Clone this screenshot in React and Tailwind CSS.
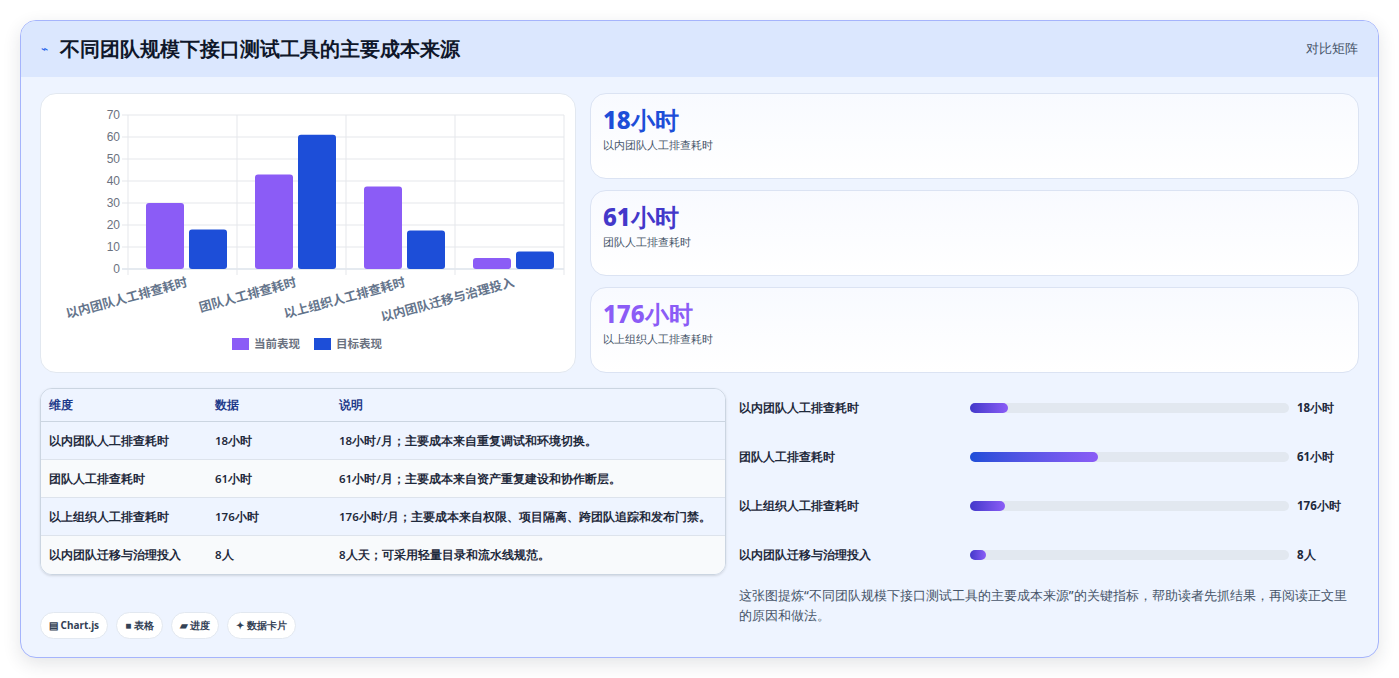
import React from "react";

const rows = [
  { name: "以内团队人工排查耗时", value: "18小时", note: "18小时/月；主要成本来自重复调试和环境切换。", cur: 30, tgt: 18, pct: 12 },
  { name: "团队人工排查耗时", value: "61小时", note: "61小时/月；主要成本来自资产重复建设和协作断层。", cur: 43, tgt: 61, pct: 40 },
  { name: "以上组织人工排查耗时", value: "176小时", note: "176小时/月；主要成本来自权限、项目隔离、跨团队追踪和发布门禁。", cur: 37.5, tgt: 17.5, pct: 11 },
  { name: "以内团队迁移与治理投入", value: "8人", note: "8人天；可采用轻量目录和流水线规范。", cur: 5, tgt: 8, pct: 5 },
];

function Chart() {
  const x0 = 87, y0 = 21, w = 436, h = 154;
  const sy = (v) => y0 + h - (v / 70) * h;
  const gw = w / 4;
  return (
    <svg width="535" height="279" className="block" style={{ fontFamily: "Liberation Sans, Noto Sans CJK SC, sans-serif" }}>
      {[0, 10, 20, 30, 40, 50, 60, 70].map((v) => (
        <g key={v}>
          <line x1={x0 - 6} x2={x0 + w} y1={sy(v)} y2={sy(v)} stroke={v === 0 ? "#cbd5e1" : "#e5e7eb"} />
          <text x={x0 - 8} y={sy(v) + 4} textAnchor="end" fontSize="12" fill="#6b7280">{v}</text>
        </g>
      ))}
      {[0, 1, 2, 3, 4].map((i) => (
        <line key={i} x1={x0 + i * gw} x2={x0 + i * gw} y1={y0} y2={y0 + h + 6} stroke="#e5e7eb" />
      ))}
      {rows.map((r, i) => {
        const gx = x0 + i * gw;
        return (
          <g key={i}>
            <rect x={gx + 18} y={sy(r.cur)} width={38} height={y0 + h - sy(r.cur)} rx="3" fill="#8b5cf6" />
            <rect x={gx + 61} y={sy(r.tgt)} width={38} height={y0 + h - sy(r.tgt)} rx="3" fill="#1d4ed8" />
            <text transform={`translate(${gx + 60},${y0 + h + 17}) rotate(-15)`} textAnchor="end" fontSize="12.5" fontWeight="700" fill="#64748b">{r.name}</text>
          </g>
        );
      })}
      <rect x="191" y="244" width="17" height="12" fill="#8b5cf6" />
      <text x="213" y="254" fontSize="11.5" fontWeight="600" fill="#6b7280">当前表现</text>
      <rect x="273" y="244" width="17" height="12" fill="#1d4ed8" />
      <text x="295" y="254" fontSize="11.5" fontWeight="600" fill="#6b7280">目标表现</text>
    </svg>
  );
}

export default function App() {
  const stats = [
    { v: "18小时", l: "以内团队人工排查耗时", c: "text-[#1d4ed8]" },
    { v: "61小时", l: "团队人工排查耗时", c: "text-[#4338ca]" },
    { v: "176小时", l: "以上组织人工排查耗时", c: "text-[#8b5cf6]" },
  ];
  return (
    <div className="min-h-screen bg-white px-5 pt-5 font-['Inter','Noto_Sans_CJK_SC',sans-serif]">
      <div className="h-[638px] overflow-hidden rounded-2xl border border-[#a5b4fc] bg-[#eef4ff] shadow-[0_6px_18px_rgba(30,41,59,0.12)]">
        <div className="flex h-[56px] items-center justify-between bg-[#dbe7fe] pl-5 pr-5">
          <div className="flex items-center gap-3">
            <span className="text-[12px] text-[#2563eb]">⌁</span>
            <h1 className="text-[20px] font-bold text-[#0f172a]">不同团队规模下接口测试工具的主要成本来源</h1>
          </div>
          <span className="text-[13px] font-medium text-[#475569]">对比矩阵</span>
        </div>
        <div className="px-[19px] pt-[16px]">
          <div className="flex gap-[14px]">
            <div className="h-[280px] w-[536px] shrink-0 rounded-2xl border border-[#e2e8f0] bg-white">
              <Chart />
            </div>
            <div className="flex flex-1 flex-col gap-[11px]">
              {stats.map((s) => (
                <div key={s.v} className="h-[86px] rounded-2xl border border-[#dbe3f3] bg-gradient-to-b from-[#f8faff] to-white px-3 pt-[10px]">
                  <div className={`text-[24px] font-extrabold leading-[32px] ${s.c}`}>{s.v}</div>
                  <div className="mt-[1px] text-[11px] font-medium text-[#475569]">{s.l}</div>
                </div>
              ))}
            </div>
          </div>
          <div className="mt-[15px] flex gap-[13px]">
            <div className="w-[686px] shrink-0">
              <div className="overflow-hidden rounded-xl border border-[#cbd5e1] text-[11.5px] shadow-sm">
                <div className="flex h-[33px] items-center border-b border-[#cbd5e1] bg-[#eef4ff] font-bold text-[#1e3a8a]">
                  <div className="w-[174px] pl-2">维度</div>
                  <div className="w-[124px]">数据</div>
                  <div>说明</div>
                </div>
                {rows.map((r, i) => (
                  <div key={i} className={`flex h-[38px] items-center font-semibold text-[#1e293b] ${i < 3 ? "border-b border-[#dde3ec]" : ""} ${i % 2 === 0 ? "bg-[#eef4ff]" : "bg-[#f8fafc]"}`}>
                    <div className="w-[174px] pl-2">{r.name}</div>
                    <div className="w-[124px]">{r.value}</div>
                    <div>{r.note}</div>
                  </div>
                ))}
              </div>
              <div className="mt-[37px] flex gap-2 text-[10px] font-bold text-[#334155]">
                {["▤ Chart.js", "■ 表格", "▰ 进度", "✦ 数据卡片"].map((t) => (
                  <span key={t} className="rounded-full border border-[#e2e8f0] bg-white px-2 py-[5px]">{t}</span>
                ))}
              </div>
            </div>
            <div className="flex-1">
              <div className="flex flex-col gap-[31px] pt-[11px]">
                {rows.map((r, i) => (
                  <div key={i} className="flex h-[18px] items-center text-[11.5px] font-semibold text-[#1e293b]">
                    <div className="w-[231px]">{r.name}</div>
                    <div className="h-[10px] w-[319px] rounded-full bg-[#e2e8f0]">
                      <div className={`h-full rounded-full ${i === 1 ? "bg-gradient-to-r from-[#1d4ed8] to-[#8b5cf6]" : "bg-gradient-to-r from-[#4338ca] to-[#8b5cf6]"}`} style={{ width: `${r.pct}%` }} />
                    </div>
                    <div className="pl-2 font-bold">{r.value}</div>
                  </div>
                ))}
              </div>
              <p className="mt-[22px] w-[615px] text-[12.5px] font-medium leading-[20px] text-[#475569]">这张图提炼“不同团队规模下接口测试工具的主要成本来源”的关键指标，帮助读者先抓结果，再阅读正文里的原因和做法。</p>
            </div>
          </div>
        </div>
      </div>
    </div>
  );
}
